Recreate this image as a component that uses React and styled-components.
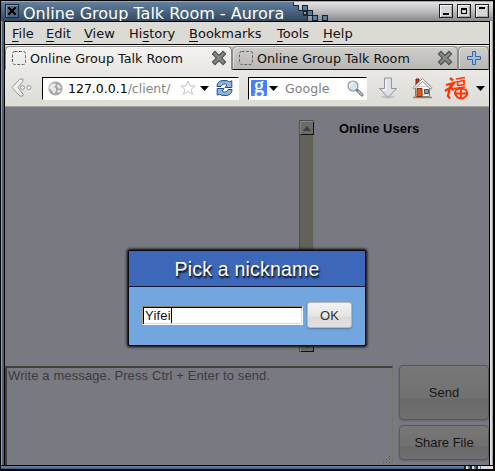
import React from "react";
import styled, { createGlobalStyle } from "styled-components";

const Global = createGlobalStyle`
  * { box-sizing: border-box; }
  body { margin: 0; background: #000; overflow: hidden; }
  button { font: inherit; }
`;

const Window = styled.div`
  width: 495px;
  height: 471px;
  display: flex;
  flex-direction: column;
  background: #000;
  padding: 1px 2px 2px 1px;
  font-family: "DejaVu Sans", sans-serif;
  font-size: 13px;
  color: #111;
`;

const TitleBar = styled.div`
  height: 20px;
  flex: none;
  display: flex;
  border-top: 1px solid #94a9bd;
  background: linear-gradient(#647f9c, #4c6885 45%, #34495e);
`;

const WindowTitle = styled.h1`
  margin: 0 0 0 4px;
  width: 269px;
  font-size: 16px;
  line-height: 23px;
  height: 19px;
  font-weight: 400;
  color: #fff;
  white-space: nowrap;
`;

const TitleTail = styled.div`
  flex: 1;
  height: 19px;
  display: flex;
  justify-content: space-between;
  background: linear-gradient(#e2e2e4, #bcbcbf 50%, #88888b);
`;

const WindowControls = styled.div`
  display: flex;
  gap: 4px;
  padding: 2px 4px 0 0;
`;

const CloseBox = styled.svg`
  margin: 2px 0 0 4px;
  flex: none;
`;

const Body = styled.div`
  flex: 1;
  min-height: 0;
  display: flex;
  background: #47647f;
  border-left: 1px solid #88a6c0;
  padding-left: 2px;
`;

const Client = styled.div`
  width: 486px;
  flex: none;
  border: 1px solid #000;
  border-bottom: 0;
  display: flex;
  flex-direction: column;
`;

const RightEdge = styled.div`
  flex: 1;
  background: linear-gradient(90deg, #efefef, #cccccf 60%, #88888b);
`;

const MenuBar = styled.nav`
  height: 23px;
  flex: none;
  display: flex;
  background: #dcdad5;
  border-bottom: 1px solid #000;
  padding-left: 7px;
  line-height: 23px;
`;

const MenuItem = styled.span`
  width: ${(p) => p.$w}px;
  white-space: nowrap;
  u { text-decoration-thickness: 1px; text-underline-offset: 3px; }
`;

const TabStrip = styled.div`
  height: 25px;
  flex: none;
  display: flex;
  background: #c6c4c0;
  border-top: 1px solid #f5f5f2;
`;

const Tab = styled.div`
  width: ${(p) => p.$w}px;
  height: 24px;
  display: flex;
  align-items: center;
  padding: 0 ${(p) => (p.$active ? 4 : 4)}px 0 6px;
  gap: 4px;
  border: 1px solid #8d8b87;
  border-bottom: 1px solid ${(p) => (p.$active ? "#eceae7" : "#111")};
  border-radius: 5px 5px 0 0;
  background: ${(p) => (p.$active ? "linear-gradient(#f4f3f1, #e9e8e5)" : "linear-gradient(#d0cecb, #b9b7b3)")};
  white-space: nowrap;
  box-shadow: inset 1px 1px #fff6;
  svg { flex: none; }
  span { flex: 1; font-size: 12.75px; }
`;

const Toolbar = styled.div`
  height: 37px;
  flex: none;
  display: flex;
  align-items: center;
  background: linear-gradient(#e9e8e5, #dddbd6);
  border-bottom: 1px solid #a5a393;
  padding: 0 0 0 6px;
  svg { flex: none; }
`;

const Field = styled.div`
  width: ${(p) => p.$w}px;
  height: 23px;
  flex: none;
  margin-left: ${(p) => p.$gap}px;
  display: flex;
  align-items: center;
  background: #fff;
  border: 1px solid #000;
  border-right-color: #fff;
  border-bottom-color: #fff;
  white-space: nowrap;
  padding-left: ${(p) => p.$pad}px;
`;

const Address = styled.span`
  width: 112px;
  flex: none;
  margin-left: 5px;
  font-size: 12.5px;
  color: #000;
  i { font-style: normal; color: #858585; }
`;

const SearchHint = styled.span`
  width: 62px;
  flex: none;
  margin-left: 7px;
  font-size: 12.6px;
  color: #808080;
`;

const GoogleMark = styled.span`
  width: 16px;
  height: 16px;
  flex: none;
  border-radius: 1px;
  background: #4680f7;
  color: #fff;
  font: 400 20px/11px "Liberation Serif", serif;
  text-align: center;
  -webkit-text-stroke: 0.4px #fff;
`;

const Icon = styled.svg`
  margin-left: ${(p) => p.$ml || 0}px;
`;

const Page = styled.main`
  height: 358px;
  flex: none;
  background: #797982;
  font-family: "Liberation Sans", Arial, sans-serif;
  font-size: 13px;
  position: relative;
  display: flex;
  flex-direction: column;
  overflow: hidden;
`;

const ChatArea = styled.section`
  height: 259px;
  flex: none;
  display: flex;
  padding-top: 13px;
`;

const Messages = styled.div`
  width: 309px;
  height: 232px;
  display: flex;
  justify-content: flex-end;
`;

const ScrollTrack = styled.div`
  width: 15px;
  display: flex;
  flex-direction: column;
  justify-content: space-between;
  background: #62625b;
  border: 1px solid #4c4c48;
  border-right-color: #77776f;
  border-bottom: 0;
`;

const ScrollButton = styled.span`
  width: 14px;
  height: 14px;
  display: grid;
  place-items: center;
  background: #6b6b68;
  border: 1px solid #888885;
  border-right-color: #111;
  border-bottom-color: #111;
`;

const UsersHeading = styled.h2`
  margin: 1px 0 0 25px;
  font-size: 13px;
  line-height: 15px;
  color: #050505;
`;

const Composer = styled.section`
  flex: 1;
  display: flex;
  gap: 6px;
`;

const Draft = styled.div`
  width: 388px;
  flex: none;
  border: 2px solid #40403c;
  border-right: 1px solid #73736f;
  border-bottom: 0;
  padding: 0 1px 1px;
  line-height: 15px;
  letter-spacing: 0.11px;
  color: #3b3b40;
  display: flex;
  justify-content: space-between;
  svg { align-self: flex-end; }
`;

const Actions = styled.div`
  width: 90px;
  margin-top: -1px;
  display: flex;
  flex-direction: column;
  gap: 5px;
`;

const ActionButton = styled.button`
  height: ${(p) => p.$h}px;
  padding: 0;
  border: 1px solid #58585a;
  border-radius: 4px;
  background: linear-gradient(#777, #717171 60%, #696969 62%, #707070);
  box-shadow: 0 1px 2px #0003;
  color: #161616;
`;

const Dialog = styled.div`
  position: absolute;
  left: 124px;
  top: 144px;
  width: 236px;
  height: 94px;
  border-radius: 1px;
  box-shadow: 0 0 0 1px #080a10, 0 0 3px 2px #000;
  background: #73a5de;
`;

const DialogTitle = styled.h2`
  margin: 0;
  height: 36px;
  border-bottom: 1px solid #101b38;
  background: #3d67b8;
  color: #fff;
  font-size: 19.5px;
  letter-spacing: 0.2px;
  font-weight: 400;
  line-height: 37px;
  text-align: center;
  text-shadow: 1px 2px 2px #000;
`;

const DialogForm = styled.form`
  display: flex;
  align-items: center;
  gap: 4px;
  padding: 15px 13px;
`;

const NameEntry = styled.div`
  width: 161px;
  height: 19px;
  flex: none;
  background: #fff;
  border: 1px solid;
  border-color: #8a8270 #fff #fff #b2a07a;
  box-shadow: inset 1px 1px #000, inset -1px -1px #ddd;
  padding: 1px 0 0 2px;
  line-height: 15px;
  letter-spacing: 0.2px;
  color: #111;
  display: flex;
`;

const Caret = styled.i`
  width: 1px;
  height: 15px;
  background: #000;
`;

const OkButton = styled.button`
  width: 45px;
  height: 26px;
  flex: none;
  padding: 0;
  border: 1px solid #b8b8b8;
  border-radius: 3px;
  background: linear-gradient(#f3f3f3, #e4e4e4 55%, #dadada 60%, #e2e2e2);
  box-shadow: 0 1px 2px #0004;
  color: #333;
`;

const BottomEdge = styled.div`
  height: 4px;
  flex: none;
  display: flex;
  border-top: 1px solid #000;
  background: linear-gradient(#6b8cab, #405b75);
`;

const EdgeTail = styled.div`
  margin-left: auto;
  width: 29px;
  background: repeating-linear-gradient(90deg, #1b2a38 0 2px, #ddd 2px 4px, #597895 4px 6px) 0 0 / 17px 100% no-repeat, #ddd;
`;

const ControlButton = ({ d }) => (
  <svg width="14" height="14" shapeRendering="crispEdges">
    <path d="M0 0h14v14H0z" fill="#222" />
    <path d="M1 1h12v12H1z" fill="#f7f7f7" />
    <path d="M2 2h11v11H2z" fill="#a5a5a8" />
    <path d="M2 2h10v10H2z" fill="#d5d5d7" />
    <path d={d} fill="#000" fillRule="evenodd" />
  </svg>
);

const Blank = () => (
  <svg width="14" height="14"><rect x=".5" y=".5" width="13" height="13" rx="2" fill="none" stroke="#666" strokeDasharray="3 1.5" /></svg>
);

const TabClose = () => (
  <svg width="16" height="16">
    <path d="m4 4 8 8m0-8-8 8" stroke="#4d514d" strokeWidth="4.8" strokeLinecap="square" />
    <path d="m4 4 8 8m0-8-8 8" stroke="#858984" strokeWidth="2.6" strokeLinecap="square" />
  </svg>
);

const Drop = ({ ml }) => <Icon $ml={ml} width="9" height="5"><path d="M0 0h9L4.5 5z" fill="#000" /></Icon>;

const BackArrow = () => (
  <svg width="22" height="22">
    <path d="M9 2h3v2L7 10.5l5 6.5v2H9L1 10.5z" fill="#f1f1ef" stroke="#969692" />
    <g fill="#f5f5f5" stroke="#999"><circle cx="11.500" cy="10.5" r="2" /><circle cx="18" cy="10.5" r="2" /></g>
  </svg>
);

const Globe = () => (
  <svg width="15" height="15">
    <circle cx="7.5" cy="7.5" r="7" fill="#a6a6a6" />
    <path d="M3 3l4-1 1 2-2 2 2 1 0 3-2 3-2-3-3-3zM10 3l3 3-1 2-2-1-1-2zM10 9l3 0-2 3-2-1z" fill="#e9e9e9" />
  </svg>
);

const Star = () => (
  <svg width="16" height="16"><path d="m8 1 2 5h5l-4 3.5 1.5 5L8 11.500l-4.500 3 1.500-5L1 6h5z" fill="#fff" stroke="#c4c4c4" /></svg>
);

const Reload = () => (
  <Icon $ml={7} width="17" height="16">
    <g fill="#8fb5e2" stroke="#204f8d" strokeLinejoin="round">
      <path d="M1 6.500C1 2.500 4 .6 7 .6h3c1.500 0 2.500.7 3 1.400L15.800.8v6.700H9l2-2.500C9.500 3.600 6 3.200 5 6.500z" />
      <path d="M16 9.500c0 4-3 5.900-6 5.900H7c-1.500 0-2.500-.7-3-1.400L1.200 15.200V8.500H8L6 11c1.500 1.400 5 1.800 6-1.500z" />
    </g>
  </Icon>
);

const Magnifier = () => (
  <svg width="17" height="17">
    <path d="m10 10 5 5" stroke="#555" strokeWidth="3" strokeLinecap="round" />
    <path d="m11 11 4 4" stroke="#ccc" strokeWidth="1.5" strokeLinecap="round" />
    <circle cx="6" cy="6" r="5" fill="#d5e2f0" stroke="#92989d" strokeWidth="1.2" />
    <path d="M3 6q0-3 3-3" fill="none" stroke="#fff" strokeWidth="1.4" />
  </svg>
);

const Download = () => (
  <Icon $ml={11} width="20" height="22">
    <ellipse cx="10" cy="20" rx="7" ry="1.5" fill="#aaa8" />
    <path d="M6.500 1h7v10.500h5L10 20.500 1.500 11.500h5z" fill="#dce1e6" stroke="#8d969e" />
    <path d="M8 2.500v10.500H5" fill="none" stroke="#fff" />
  </Icon>
);

const Home = () => (
  <Icon $ml={14} width="21" height="22">
    <path d="M1 20.500h19" stroke="#76964b" strokeWidth="1.500" />
    <path d="M4 2h3v6H4z" fill="#c63d19" stroke="#702414" />
    <path d="M3.500 9 10.500 3l7 6v10.500h-14z" fill="#f5f5f3" stroke="#7c7c79" />
    <path d="M5 9.500h11M4 17.500h13" stroke="#d2d2cf" />
    <path d="M.8 10.800 10.500 1.500l9.700 9.300-1.500 1.200-8.200-7.500L2.300 12z" fill="#f4f4f2" stroke="#777" strokeWidth=".8" />
    <path d="M5 11.500h5v8H5z" fill="#e25518" stroke="#8e2d09" />
    <path d="M12.500 12.500h4v4h-4z" fill="#8b9aa5" stroke="#505050" />
  </Icon>
);

const Fortune = () => (
  <Icon $ml={11} width="25" height="24" fill="none" stroke="#ff3406">
    <path d="M6 2l3 2.500M2 9l8-2-3 4-6 4M7 9l-1.500 4L4 20l2 2.500M7 12l3 2" strokeWidth="2.300" />
    <path d="M12 3l9-1.500M13 6l7-1.500 0 4-6 1M13 5l1 5" strokeWidth="1.700" />
    <path d="M10 12.500l11-1.500" strokeWidth="1.600" />
    <path d="M12 14q5-3 10 0 3 4-1 7-4 3-8 0-3-4-1-7zM17 12v11M10 17.500h13" strokeWidth="1.900" />
  </Icon>
);

const SearchRow = () => (
  <Field $w={119} $gap={9} $pad={2}>
    <GoogleMark>g</GoogleMark>
    <Drop ml={2} />
    <SearchHint>Google</SearchHint>
    <Magnifier />
  </Field>
);

export default function App() {
  return (
    <>
      <Global />
      <Window>
        <TitleBar>
          <CloseBox width="14" height="14" shapeRendering="crispEdges">
            <path d="M0 0h14v14H0z" fill="#1a2838" />
            <path d="M1 1h12v12H1z" fill="#829cb6" />
            <path d="M2 2h11v11H2z" fill="#4a6783" />
            <path d="M3 3h2v1h1v1h2V4h1V3h2v2h-1v1H9v2h1v1h1v2H9v-1H8V9H6v1H5v1H3V9h1V8h1V6H4V5H3z" fill="#000" />
          </CloseBox>
          <WindowTitle>Online Group Talk Room - Aurora</WindowTitle>
          <TitleTail>
            <svg width="40" height="19" shapeRendering="crispEdges">
              <defs>
                <linearGradient id="bar" x2="0" y2="1"><stop stopColor="#647f9c" /><stop offset=".45" stopColor="#4c6885" /><stop offset="1" stopColor="#34495e" /></linearGradient>
              </defs>
              <path d="M0 0h1v4h5v5h5v5h5v5H0z" fill="url(#bar)" />
              <path d="M1.5 0v3.500h5v5h5v5h4V19" fill="none" stroke="#1c2a38" />
              <g fill="#5d7d9c" stroke="#17222e">
                <path d="M10.500 3.500h5v5h-5zM15.500 8.500h5v5h-5zM20.500 13.500h5v5h-5zM30.500 13.500h5v5h-5z" />
                <path d="M11.500 9.500h3v3h-3z" fill="#9a9a9c" />
              </g>
            </svg>
            <WindowControls>
              <ControlButton d="M4 9h6v2H4z" />
              <ControlButton d="M4 4h6v6H4zM5 6v3h4V6z" />
              <ControlButton d="M4 3h6v2H4z" />
            </WindowControls>
          </TitleTail>
        </TitleBar>
        <Body>
          <Client>
            <MenuBar>
              <MenuItem $w={34}><u>F</u>ile</MenuItem>
              <MenuItem $w={38}><u>E</u>dit</MenuItem>
              <MenuItem $w={45}><u>V</u>iew</MenuItem>
              <MenuItem $w={60}>Hi<u>s</u>tory</MenuItem>
              <MenuItem $w={88}><u>B</u>ookmarks</MenuItem>
              <MenuItem $w={46}><u>T</u>ools</MenuItem>
              <MenuItem $w={40}><u>H</u>elp</MenuItem>
            </MenuBar>
            <TabStrip>
              <Tab $w={227} $active><Blank /><span>Online Group Talk Room</span><TabClose /></Tab>
              <Tab $w={226}><Blank /><span>Online Group Talk Room</span><TabClose /></Tab>
              <Tab $w={31}>
                <svg width="18" height="16"><path d="M7.500 1.500h3v5h5v3h-5v5h-3v-5h-5v-3h5z" fill="#9cc0ea" stroke="#3465a4" /></svg>
              </Tab>
            </TabStrip>
            <Toolbar>
              <BackArrow />
              <Field $w={197} $gap={9} $pad={5}>
                <Globe />
                <Address>127.0.0.1<i>/client/</i></Address>
                <Star />
                <Drop ml={4} />
                <Reload />
              </Field>
              <SearchRow />
              <Download />
              <Home />
              <Fortune />
              <Drop ml={7} />
            </Toolbar>
            <Page>
              <ChatArea>
                <Messages>
                  <ScrollTrack>
                    <ScrollButton><svg width="8" height="5"><path d="M4 0l4 5H0z" fill="#3f3f3d" /></svg></ScrollButton>
                    <ScrollButton><svg width="8" height="5"><path d="M0 0h8L4 5z" fill="#3f3f3d" /></svg></ScrollButton>
                  </ScrollTrack>
                </Messages>
                <UsersHeading>Online Users</UsersHeading>
              </ChatArea>
              <Composer>
                <Draft>
                  Write a message. Press Ctrl + Enter to send.
                  <svg width="8" height="8" fill="#55555a"><path d="M6 0h1v1H6zM3 3h1v1H3zM6 3h1v1H6zM0 6h1v1H0zM3 6h1v1H3zM6 6h1v1H6z" /></svg>
                </Draft>
                <Actions>
                  <ActionButton $h={55}>Send</ActionButton>
                  <ActionButton $h={35}>Share File</ActionButton>
                </Actions>
              </Composer>
              <Dialog>
                <DialogTitle>Pick a nickname</DialogTitle>
                <DialogForm>
                  <NameEntry>Yifei<Caret /></NameEntry>
                  <OkButton type="button">OK</OkButton>
                </DialogForm>
              </Dialog>
            </Page>
          </Client>
          <RightEdge />
        </Body>
        <BottomEdge><EdgeTail /></BottomEdge>
      </Window>
    </>
  );
}
